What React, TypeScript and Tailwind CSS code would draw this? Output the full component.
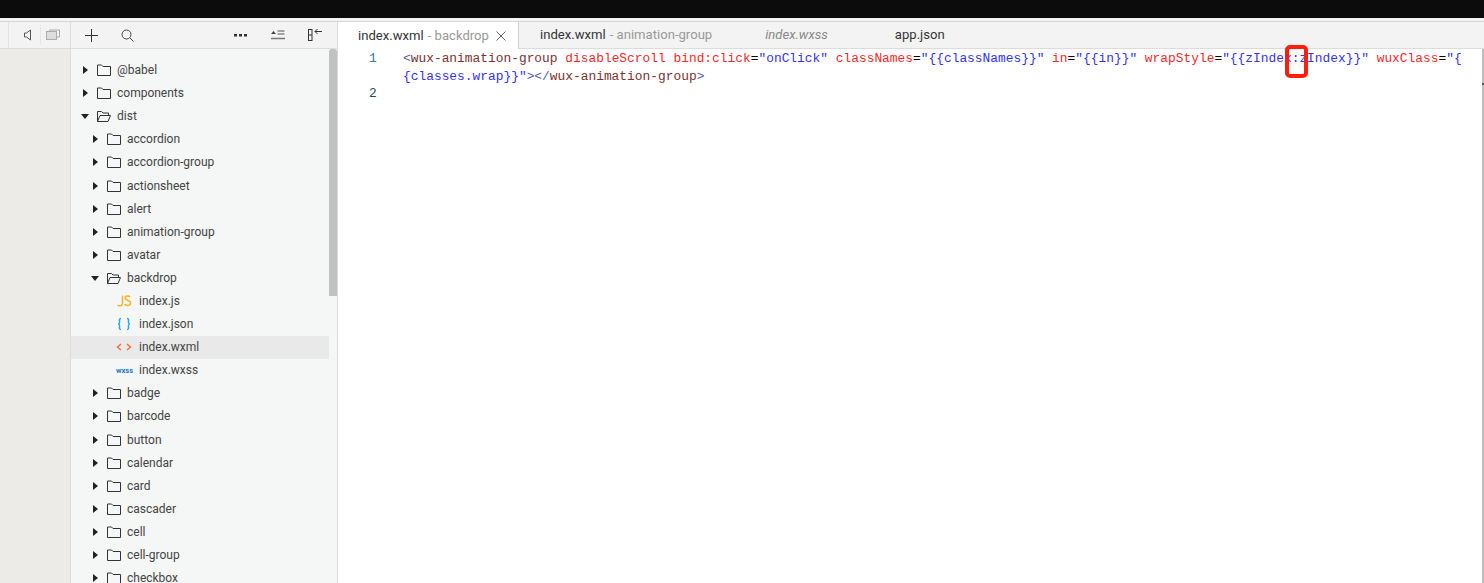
const sans = { fontFamily: 'Roboto, "Liberation Sans", sans-serif' };

type Row = { label: string; depth: number; kind: 'closed' | 'open' | 'js' | 'json' | 'wxml' | 'wxss'; active?: boolean };

const rows: Row[] = [
  { label: '@babel', depth: 0, kind: 'closed' },
  { label: 'components', depth: 0, kind: 'closed' },
  { label: 'dist', depth: 0, kind: 'open' },
  { label: 'accordion', depth: 1, kind: 'closed' },
  { label: 'accordion-group', depth: 1, kind: 'closed' },
  { label: 'actionsheet', depth: 1, kind: 'closed' },
  { label: 'alert', depth: 1, kind: 'closed' },
  { label: 'animation-group', depth: 1, kind: 'closed' },
  { label: 'avatar', depth: 1, kind: 'closed' },
  { label: 'backdrop', depth: 1, kind: 'open' },
  { label: 'index.js', depth: 2, kind: 'js' },
  { label: 'index.json', depth: 2, kind: 'json' },
  { label: 'index.wxml', depth: 2, kind: 'wxml', active: true },
  { label: 'index.wxss', depth: 2, kind: 'wxss' },
  { label: 'badge', depth: 1, kind: 'closed' },
  { label: 'barcode', depth: 1, kind: 'closed' },
  { label: 'button', depth: 1, kind: 'closed' },
  { label: 'calendar', depth: 1, kind: 'closed' },
  { label: 'card', depth: 1, kind: 'closed' },
  { label: 'cascader', depth: 1, kind: 'closed' },
  { label: 'cell', depth: 1, kind: 'closed' },
  { label: 'cell-group', depth: 1, kind: 'closed' },
  { label: 'checkbox', depth: 1, kind: 'closed' },
];

function Arrow({ open }: { open: boolean }) {
  return (
    <svg width="10" height="10" viewBox="0 0 10 10" className="shrink-0">
      {open ? <path d="M1 3h8L5 8z" fill="#222" /> : <path d="M3 1l5 4-5 4z" fill="#222" />}
    </svg>
  );
}

function Folder({ open }: { open: boolean }) {
  return (
    <svg width="16" height="14" viewBox="0 0 16 14" fill="none" stroke="#333" strokeWidth="1" className="shrink-0">
      {open ? (
        <path d="M1.5 12.5v-10h4l1.5 1.5h5.500v2M1.500 12.500l2.500-6h10.500l-2.500 6z" />
      ) : (
        <path d="M1.500 12.500v-10.500h4l1.500 1.500h7.500v9z" />
      )}
    </svg>
  );
}

function FileIcon({ kind }: { kind: Row['kind'] }) {
  if (kind === 'js')
    return (
      <svg width="16" height="14" viewBox="0 0 16 14" fill="none" stroke="#f7b32b" strokeWidth="1.500">
        <path d="M6.500 1.500v8c0 2.500-3.500 3-5 1.500M14 3c-1-1.500-5-1.500-5 1s5.500 2 5.500 5-4.500 3-6 1" />
      </svg>
    );
  if (kind === 'json')
    return (
      <svg width="16" height="14" viewBox="0 0 16 14" fill="none" stroke="#27a9e6" strokeWidth="1.500">
        <path d="M5 1.500C3 1.500 3.500 3 3.500 5S3 7 2 7c1 0 1.500 0 1.500 2s-.5 3.500 1.500 3.500M11 1.500c2 0 1.500 1.500 1.500 3.500s.5 2 1.500 2c-1 0-1.500 0-1.500 2s.5 3.500-1.500 3.500" />
      </svg>
    );
  if (kind === 'wxml')
    return (
      <svg width="16" height="14" viewBox="0 0 16 14" fill="none" stroke="#f0703a" strokeWidth="1.500">
        <path d="M5 4L1.500 7 5 10M11 4l3.500 3L11 10" />
      </svg>
    );
  return <span className="w-[16px] text-center text-[7.500px] font-bold text-[#1b77c4]">wxss</span>;
}

function TreeRow({ row }: { row: Row }) {
  const isFolder = row.kind === 'closed' || row.kind === 'open';
  const left = row.depth === 0 ? 'pl-[9px]' : row.depth === 1 ? 'pl-[19px]' : 'pl-[45px]';
  return (
    <div className={`flex h-[23.1px] items-center ${left} ${row.active ? 'bg-[#e9e9e9]' : ''}`}>
      {isFolder ? (
        <>
          <Arrow open={row.kind === 'open'} />
          <span className="ml-[6px] flex">
            <Folder open={row.kind === 'open'} />
          </span>
          <span className="ml-[5px] text-[12px] text-[#444]">{row.label}</span>
        </>
      ) : (
        <>
          <FileIcon kind={row.kind} />
          <span className="ml-[7px] text-[12px] text-[#444]">{row.label}</span>
        </>
      )}
    </div>
  );
}

function Toolbar() {
  return (
    <div className="flex h-[27px] shrink-0 border-b border-[#dcdcdc] bg-[#f3f3f3]">
      <div className="flex w-[71px] shrink-0 items-center border-r border-[#dcdcdc]">
        <div className="h-full w-[9px] border-r border-[#e4e4e4]" />
        <svg width="8" height="12" viewBox="0 0 8 12" fill="none" stroke="#555" className="ml-[15px]">
          <path d="M.5 4v4h2l4 3V1l-4 3z" />
        </svg>
        <div className="ml-[8px] h-[20px] w-px bg-[#e6e6e6]" />
        <svg width="14" height="12" viewBox="0 0 14 12" fill="none" stroke="#aaa" className="ml-[5px]">
          <path d="M3.500 2.500V1h10v7h-3" />
          <rect x=".5" y="2.500" width="10" height="8" fill="#ddd" />
        </svg>
      </div>
      <div className="flex w-[267px] shrink-0 items-center border-r border-[#dcdcdc]">
        <svg width="13" height="13" viewBox="0 0 13 13" stroke="#333" className="ml-[14px]">
          <path d="M6.500 0v13M0 6.500h13" />
        </svg>
        <svg width="13" height="13" viewBox="0 0 13 13" fill="none" stroke="#444" className="ml-[23px]">
          <circle cx="5.500" cy="5.500" r="4.500" />
          <path d="M9 9l3.500 3.500" />
        </svg>
        <svg width="14" height="3" viewBox="0 0 14 3" fill="#333" className="ml-[100px]">
          <rect width="3" height="2.500" />
          <rect x="5" width="3" height="2.500" />
          <rect x="10" width="3" height="2.500" />
        </svg>
        <svg width="14" height="10" viewBox="0 0 14 10" className="ml-[23px]">
          <path d="M0 4l2.500-3L5 4z" fill="#444" />
          <path d="M6.500 1h7M6.500 4h7" stroke="#555" />
          <path d="M0 8.500h14" stroke="#777" strokeWidth="1.500" />
        </svg>
        <svg width="15" height="14" viewBox="0 0 15 14" fill="none" stroke="#333" className="ml-[23px]">
          <rect x=".5" y="1.500" width="3.500" height="11" />
          <path d="M.5 7h3.500M7 3.500h7M7 3.500l2.500-2.500M7 3.500l2.500 2.500" />
        </svg>
      </div>
      <div className="flex min-w-0 flex-1 text-[13.100px] text-[#333]">
        <div className="flex h-[27px] w-[181px] items-center border-r border-[#cfcfcf] bg-white pl-5">
          <span>index.wxml</span>
          <span className="ml-1 text-[#999]">- backdrop</span>
          <svg width="10" height="10" viewBox="0 0 10 10" stroke="#666" className="ml-[7px]">
            <path d="M.5.5l9 9M9.500.5l-9 9" />
          </svg>
        </div>
        <div className="flex items-center pl-[21px]">
          <span>index.wxml</span>
          <span className="ml-1 text-[#999]">- animation-group</span>
        </div>
        <div className="ml-[53px] flex items-center italic text-[#888]">index.wxss</div>
        <div className="ml-[67px] flex items-center">app.json</div>
      </div>
    </div>
  );
}

function Code() {
  const tag = 'text-[#7a3232]';
  const attr = 'text-[#f52a2a]';
  const str = 'text-[#3333f0]';
  const br = 'text-[#5a5ab8]';
  return (
    <div className="relative min-w-0 flex-1 bg-white" style={{ fontFamily: '"Liberation Mono", monospace' }}>
      <div className="flex pt-[1px] text-[12.880px] leading-[17.6px]">
        <div className="w-[65px] shrink-0">
          <div className="pl-[31px] text-[#3a7a90]">1</div>
          <div className="h-[17.6px]" />
          <div className="pl-[31px] text-[#2a4a60]">2</div>
        </div>
        <div className="min-w-0 flex-1 whitespace-pre">
          <div>
            <span className={br}>{'<'}</span>
            <span className={tag}>wux-animation-group</span> <span className={attr}>disableScroll</span>{' '}
            <span className={attr}>bind:click</span>=<span className={str}>"onClick"</span>{' '}
            <span className={attr}>classNames</span>=<span className={str}>{'"{{classNames}}"'}</span>{' '}
            <span className={attr}>in</span>=<span className={str}>{'"{{in}}"'}</span>{' '}
            <span className={attr}>wrapStyle</span>=<span className={str}>{'"{{zIndex:zIndex}}"'}</span>{' '}
            <span className={attr}>wuxClass</span>=<span className={str}>{'"{'}</span>
          </div>
          <div>
            <span className={str}>{'{classes.wrap}}"'}</span>
            <span className={br}>{'></'}</span>
            <span className={tag}>wux-animation-group</span>
            <span className={br}>{'>'}</span>
          </div>
        </div>
      </div>
      <div className="absolute left-[947px] top-[-4px] h-[33px] w-[23px] rounded-[5px] border-[4px] border-[#ff1d0e]" />
      <div className="absolute right-0 top-0 h-full w-[2px] bg-[#bdbdbd]" />
      <div className="absolute right-0 top-[34px] h-[2px] w-[2px] bg-[#555]" />
    </div>
  );
}

export default function App() {
  return (
    <div className="flex h-[583px] w-[1484px] flex-col overflow-hidden bg-white" style={sans}>
      <div className="h-[18px] shrink-0 bg-[#0c0c0c]" />
      <div className="h-[4px] shrink-0 border-b border-[#d6d6d6] bg-[#f4f4f4]" />
      <Toolbar />
      <div className="flex min-h-0 flex-1">
        <div className="w-[71px] shrink-0 border-r border-[#dcdcdc] bg-[#ecebe8]" />
        <div className="relative w-[267px] shrink-0 overflow-hidden border-r border-[#dcdcdc] bg-[#f5f6f6]">
          <div className="w-[258px] pt-[9.500px]">
            {rows.map((r) => (
              <TreeRow key={r.label + r.depth} row={r} />
            ))}
          </div>
          <div className="absolute right-0 top-0 h-[247px] w-[8px] rounded-t-[3px] bg-[#c1c1c1]" />
        </div>
        <Code />
      </div>
    </div>
  );
}
